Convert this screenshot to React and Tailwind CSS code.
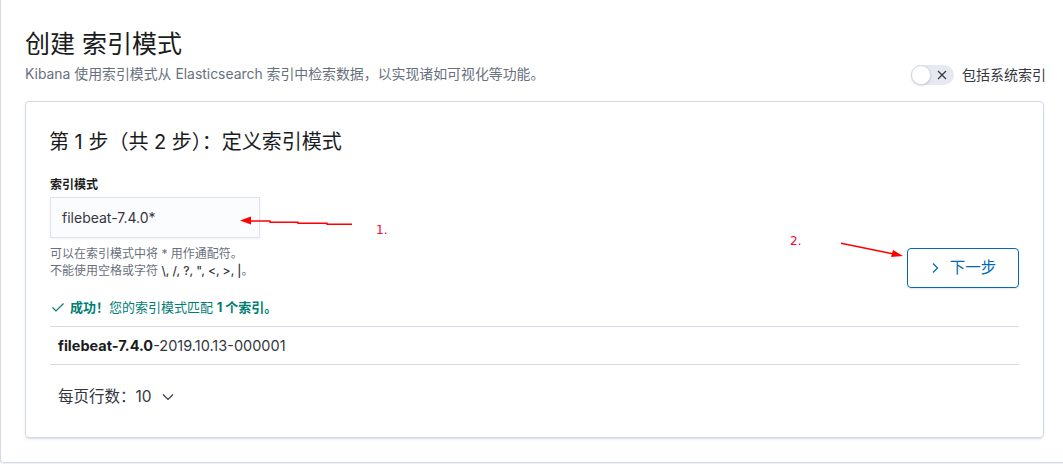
import React from "react";

const font = { fontFamily: 'Inter, "Noto Sans CJK SC", sans-serif' };

export default function App() {
  return (
    <div
      className="relative w-[1063px] h-[464px] overflow-hidden bg-white text-[#343741]"
      style={font}
    >
      <div className="h-[463px] w-[1075px] border-b border-l border-[#d3dae6] rounded-bl-[4px] shadow-[0_1px_2px_rgba(152,162,179,0.2)] bg-white">
        <div className="w-[1063px] px-6 pt-[26px]">
          {/* Header */}
          <div className="flex items-end justify-between">
            <div>
              <h1 className="text-[25px] leading-[36px] text-[#1a1c21] font-normal">创建 索引模式</h1>
              <p className="mt-[2px] text-[13.9px] leading-[20px] text-[#69707d]">
                Kibana 使用索引模式从 Elasticsearch 索引中检索数据，以实现诸如可视化等功能。
              </p>
            </div>
            <div className="flex items-center gap-[8px] mb-[-1px] mr-[-6px]">
              <div className="relative w-[43px] h-[20px] rounded-full bg-[#e6eaf0]">
                <div className="absolute left-0 top-0 w-[20px] h-[20px] rounded-full bg-white border border-[#d3dae6] shadow-[0_1px_2px_rgba(0,0,0,0.15)]" />
                <svg className="absolute left-[26px] top-[5px]" width="10" height="10" viewBox="0 0 10 10">
                  <path d="M1 1 L9 9 M9 1 L1 9" stroke="#343741" strokeWidth="1.2" />
                </svg>
              </div>
              <span className="text-[14px] leading-[20px] text-[#343741]">包括系统索引</span>
            </div>
          </div>

          {/* Card */}
          <div className="mt-[17px] w-[1019px] h-[337px] rounded-[4px] border border-[#d3dae6] bg-white shadow-[0_2px_2px_-1px_rgba(152,162,179,0.3),0_1px_5px_-2px_rgba(152,162,179,0.3)] p-6">
            <h2 className="text-[20px] leading-[36px] text-[#1a1c21] -mt-[2px] -ml-[1px]">第 1 步（共 2 步）：定义索引模式</h2>
            <div className="flex justify-between mt-[17px]">
              <div>
                <div className="text-[12px] leading-[16px] font-semibold text-[#1a1c21]">索引模式</div>
                <div className="mt-[4px] w-[210px] h-[41px] bg-[#fbfcfd] border border-[#dfe3e9] shadow-[0_1px_2px_rgba(0,0,0,0.06)] flex items-center px-[11px] text-[14px] text-[#343741]">
                  filebeat-7.4.0*
                </div>
                <div className="mt-[7px] text-[12px] leading-[17px] text-[#69707d]">
                  <div>可以在索引模式中将 * 用作通配符。</div>
                  <div>
                    不能使用空格或字符 <span className="text-[#343741] font-medium">\, /, ?, ", &lt;, &gt;, |</span>。
                  </div>
                </div>
              </div>
              <button className="mt-[71px] w-[112px] h-[40px] rounded-[4px] border border-[#006bb4] text-[#006bb4] flex items-center justify-center gap-[10px] text-[15.5px] shadow-[0_2px_2px_-1px_rgba(152,162,179,0.3)]">
                <svg width="10" height="12" viewBox="0 0 10 12">
                  <path d="M3 1.5 L7.5 6 L3 10.5" fill="none" stroke="#006bb4" strokeWidth="1.3" />
                </svg>
                <span>下一步</span>
              </button>
            </div>

            <div className="mt-[9px] flex items-center gap-[5px] text-[13px] leading-[20px] text-[#017d73]">
              <svg width="14" height="14" viewBox="0 0 14 14" className="ml-[1px]">
                <path d="M1.5 7.5 L5 11 L12.5 3.5" fill="none" stroke="#017d73" strokeWidth="1.2" />
              </svg>
              <span>
                <b className="font-bold">成功！</b>您的索引模式匹配 <b className="font-bold">1 个索引。</b>
              </span>
            </div>

            <div className="mt-[9px] border-t border-[#d3dae6]" />
            <div className="h-[37px] flex items-center px-[8px] text-[14.5px] text-[#1a1c21]">
              <b className="font-bold">filebeat-7.4.0</b>
              <span className="text-[#343741]">-2019.10.13-000001</span>
            </div>
            <div className="border-t border-[#d3dae6]" />

            <div className="mt-[20px] flex items-center gap-[9px] px-[8px] text-[15.5px] leading-[24px] text-[#343741]">
              <span>每页行数：10</span>
              <svg width="14" height="10" viewBox="0 0 14 10">
                <path d="M2 2.5 L7 7.5 L12 2.5" fill="none" stroke="#343741" strokeWidth="1.2" />
              </svg>
            </div>
          </div>
        </div>
      </div>

      {/* Annotations */}
      <svg className="absolute left-0 top-0 pointer-events-none" width="1063" height="464">
        <path d="M352 224.3 L327 224.3 L327 223.3 L298 223.3 L298 222.3 L270 222.3 L270 221 L249 221" fill="none" stroke="#ff0000" strokeWidth="1.4" />
        <polygon points="240,220.5 251,216.5 251,224.5" fill="#ff0000" />
        <path d="M841 243.3 L895 254.3" fill="none" stroke="#ff0000" strokeWidth="1.4" />
        <polygon points="903,256 893,250 891,257" fill="#ff0000" />
      </svg>
      <span className="absolute left-[376px] top-[223px] text-[12px] leading-[14px] text-[#ff0033]" style={{ fontFamily: '"DejaVu Sans", sans-serif' }}>1.</span>
      <span className="absolute left-[790px] top-[234px] text-[12px] leading-[14px] text-[#ff0033]" style={{ fontFamily: '"DejaVu Sans", sans-serif' }}>2.</span>
    </div>
  );
}
